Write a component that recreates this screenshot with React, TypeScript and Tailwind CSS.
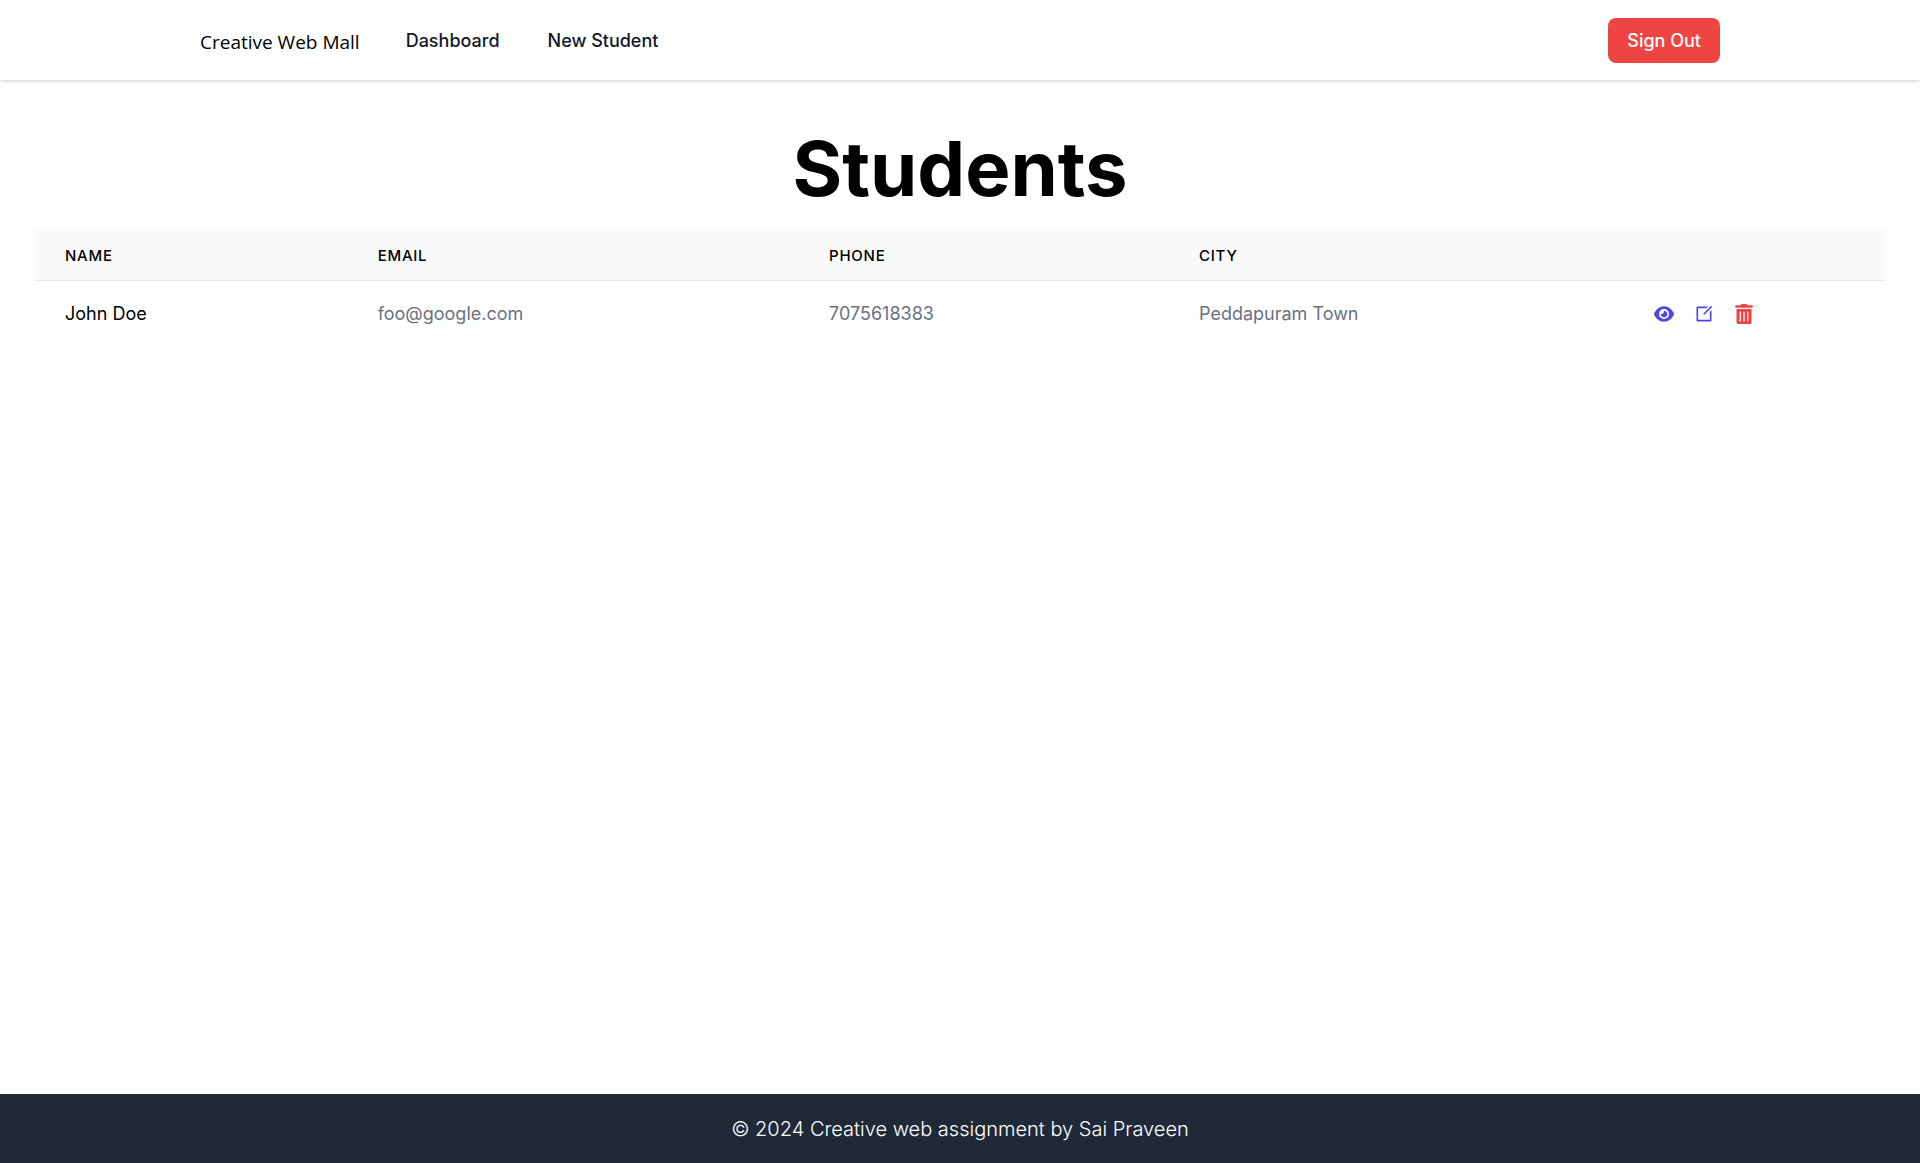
import { FaTrashAlt } from "react-icons/fa";
import { FaEye } from "react-icons/fa6";
import { RiEditBoxLine } from "react-icons/ri";

type Student = { name: string; email: string; phone: string; city: string };

const students: Student[] = [
  { name: "John Doe", email: "foo@google.com", phone: "7075618383", city: "Peddapuram Town" },
];

function Header() {
  return (
    <header className="bg-white shadow-[0_1px_4px_rgba(0,0,0,0.2)]">
      <div className="mx-auto flex h-20 max-w-[1600px] items-center justify-between px-10">
        <div className="flex items-center gap-[46px]">
          <a href="#" className="pt-1 font-['Open_Sans','Noto_Sans',sans-serif] text-[19px] leading-7 text-black">
            Creative Web Mall
          </a>
          <nav className="flex items-center gap-12 text-[18px] leading-[25px] font-medium text-[#111827]">
            <a href="#dashboard">Dashboard</a>
            <a href="#new">New Student</a>
          </nav>
        </div>
        <button
          type="button"
          className="rounded-lg bg-[#ef4444] px-[19px] py-[10px] text-[18px] leading-[25px] font-medium text-white"
        >
          Sign Out
        </button>
      </div>
    </header>
  );
}

function StudentTable() {
  return (
    <table className="w-full table-fixed text-left">
      <colgroup>
        <col className="w-[16.9%]" />
        <col className="w-[24.4%]" />
        <col className="w-[20%]" />
        <col className="w-[24.6%]" />
        <col className="w-[14.1%]" />
      </colgroup>
      <thead className="border-b border-[#e5e7eb] bg-[#f9fafb] text-[15px] leading-5 tracking-wider text-black uppercase">
        <tr>
          <th className="px-[30px] pt-4 pb-[14px] font-medium">Name</th>
          <th className="px-[30px] pt-4 pb-[14px] font-medium">Email</th>
          <th className="px-[30px] pt-4 pb-[14px] font-medium">Phone</th>
          <th className="px-[30px] pt-4 pb-[14px] font-medium">City</th>
          <th className="px-[30px] pt-4 pb-[14px]" aria-label="Actions" />
        </tr>
      </thead>
      <tbody className="bg-white text-[18px] leading-[25px] text-[#6b7280]">
        {students.map((s) => (
          <tr key={s.email}>
            <td className="px-[30px] py-5 text-black">{s.name}</td>
            <td className="px-[30px] py-5">{s.email}</td>
            <td className="px-[30px] py-5">{s.phone}</td>
            <td className="px-[30px] py-5">{s.city}</td>
            <td className="px-[30px] py-5">
              <div className="flex items-center gap-5 text-[20px] text-[#4f46e5]">
                <a href="#view" aria-label="View">
                  <FaEye />
                </a>
                <a href="#edit" aria-label="Edit">
                  <RiEditBoxLine />
                </a>
                <button type="button" aria-label="Delete" className="text-[#ef4444]">
                  <FaTrashAlt />
                </button>
              </div>
            </td>
          </tr>
        ))}
      </tbody>
    </table>
  );
}

export default function App() {
  return (
    <div className="flex min-h-screen flex-col bg-white font-['Inter',sans-serif]">
      <Header />
      <main className="flex-1 px-[35px] pt-12">
        <h1 className="mb-[22px] text-center text-[76px] leading-20 font-bold text-black">Students</h1>
        <StudentTable />
      </main>
      <footer className="bg-[#1f2937] px-5 pt-[21px] pb-[19px] text-center text-[20px] leading-[29px] font-light text-white">
        © 2024 Creative web assignment by Sai Praveen
      </footer>
    </div>
  );
}
